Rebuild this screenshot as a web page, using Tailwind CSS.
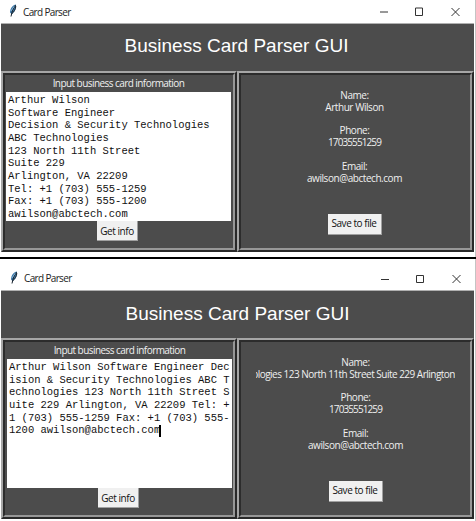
<!DOCTYPE html>
<html lang="en">
<head>
<meta charset="utf-8">
<title>Card Parser</title>
<script src="https://cdn.jsdelivr.net/npm/@tailwindcss/browser@4"></script>
</head>
<body class="w-[476px] h-[521px] overflow-hidden bg-white font-['Open_Sans','Noto_Sans',sans-serif] text-[10px] tracking-[-0.45px]">

<section class="h-[257px] pl-px pr-px border-r border-[#c4c4c4]">
  <header class="h-[23px] flex items-center pl-[8px] pr-[14px] text-[#222]">
    <svg class="w-[8px] h-[13px] mt-[-2px]" viewBox="0 0 8 13"><path d="M7 .5C4 1 1 4 1 8.5L2.5 10C6 8 7.3 4 7 .5Z" fill="#3c78a8"/><path d="M6.6 1.2C4.5 4 3 7 2 12.5M6.8 2C6.8 5 5 8.2 2.5 10" fill="none" stroke="#17232e" stroke-width="1"/><path d="M5.2 2.3 2 7" stroke="#9cc5e2" stroke-width=".8"/></svg>
    <span class="ml-[6px] leading-[14px] tracking-[-0.65px]">Card Parser</span>
    <svg class="ml-auto w-[82px] h-[12px]" viewBox="0 0 82 12" fill="none" stroke="#333" stroke-width="1"><path d="M2 6h8M37.5 2h7v7.5h-7zM73.5 2l8 8m0-8-8 8"/></svg>
  </header>
  <div class="h-[48px] bg-[#4c4c4c] border-t border-[#b0b0b0] flex items-center justify-center pb-[2px] pr-[2px] text-white font-['Liberation_Sans',sans-serif] text-[19px] tracking-[0px]">Business Card Parser GUI</div>
  <div class="flex h-[181px] bg-[#4c4c4c]">
    <div class="w-[236px] border-2 border-t-[#a6a6a6] border-l-[#a6a6a6] border-r-[#292929] border-b-[#292929]">
      <div class="h-full border-2 border-t-[#2c2c2c] border-l-[#2c2c2c] border-r-[#979797] border-b-[#979797] flex flex-col items-center">
        <div class="h-[17px] leading-[17px] text-[#f0f0f0] tracking-[-0.56px] pr-px">Input business card information</div>
        <div class="self-start ml-px w-[225px] h-[129px] bg-white pl-[2px] pt-[2px] text-[#111] font-['Liberation_Mono',monospace] text-[10.5px] leading-[12.65px] tracking-[0px] whitespace-pre">Arthur Wilson
Software Engineer
Decision &amp; Security Technologies
ABC Technologies
123 North 11th Street
Suite 229
Arlington, VA 22209
Tel: +1 (703) 555-1259
Fax: +1 (703) 555-1200
awilson@abctech.com</div>
        <button class="mr-[3px] w-[41px] h-[20px] bg-[#f0f0f0] border-r border-b border-[#a0a0a0] leading-[18px] text-[#111]">Get info</button>
      </div>
    </div>
    <div class="w-[237px] border-2 border-t-[#a6a6a6] border-l-[#a6a6a6] border-r-[#292929] border-b-[#292929]">
      <div class="h-full border-2 border-t-[#2c2c2c] border-l-[#2c2c2c] border-r-[#979797] border-b-[#979797] flex flex-col items-center pt-[15px] pr-[2px] text-[#f0f0f0] text-center leading-[11.8px] whitespace-nowrap">
        <div>Name:<br>Arthur Wilson</div>
        <div class="mt-[11.8px]">Phone:<br><span class="tracking-[-0.9px]">17035551259</span></div>
        <div class="mt-[11.8px]">Email:<br>awilson@abctech.com</div>
        <button class="mt-[30px] w-[54px] h-[21px] bg-[#f0f0f0] border-r border-b border-[#a0a0a0] text-[#111]">Save to file</button>
      </div>
    </div>
  </div>
</section>

<div class="h-[2px] bg-black"></div>

<section class="h-[262px] pl-px pr-px border-r border-[#c4c4c4]">
  <header class="h-[31px] flex items-end pl-[9px] pr-[13px] pb-[5px] text-[#222]">
    <svg class="w-[8px] h-[13px] mb-[1px]" viewBox="0 0 8 13"><path d="M7 .5C4 1 1 4 1 8.5L2.5 10C6 8 7.3 4 7 .5Z" fill="#3c78a8"/><path d="M6.6 1.2C4.5 4 3 7 2 12.5M6.8 2C6.8 5 5 8.2 2.5 10" fill="none" stroke="#17232e" stroke-width="1"/><path d="M5.2 2.3 2 7" stroke="#9cc5e2" stroke-width=".8"/></svg>
    <span class="ml-[6px] leading-[14px] tracking-[-0.65px]">Card Parser</span>
    <svg class="ml-auto w-[82px] h-[12px]" viewBox="0 0 82 12" fill="none" stroke="#333" stroke-width="1"><path d="M2 6.5h8M37.5 2.5h7v7h-7zM73.5 2l8 8m0-8-8 8"/></svg>
  </header>
  <div class="h-[48px] bg-[#4c4c4c] border-t border-[#b0b0b0] flex items-center justify-center pb-px text-white font-['Liberation_Sans',sans-serif] text-[19px] tracking-[0px]">Business Card Parser GUI</div>
  <div class="flex h-[181px] bg-[#4c4c4c]">
    <div class="w-[236px] border-2 border-t-[#a6a6a6] border-l-[#a6a6a6] border-r-[#292929] border-b-[#292929]">
      <div class="h-full border-2 border-t-[#2c2c2c] border-l-[#2c2c2c] border-r-[#979797] border-b-[#979797] flex flex-col items-center">
        <div class="h-[17px] leading-[17px] text-[#f0f0f0] tracking-[-0.56px] pl-px">Input business card information</div>
        <div class="self-start ml-[2px] w-[225px] h-[129px] bg-white pl-[2px] pt-[2px] text-[#111] font-['Liberation_Mono',monospace] text-[10.5px] leading-[12.65px] tracking-[0px] whitespace-pre">Arthur Wilson Software Engineer Dec
ision &amp; Security Technologies ABC T
echnologies 123 North 11th Street S
uite 229 Arlington, VA 22209 Tel: +
1 (703) 555-1259 Fax: +1 (703) 555-
1200 awilson@abctech.com<span class="inline-block -ml-px w-[2px] h-[12px] bg-black align-middle"></span></div>
        <button class="mr-px w-[41px] h-[20px] bg-[#f0f0f0] border-r border-b border-[#a0a0a0] leading-[18px] text-[#111]">Get info</button>
      </div>
    </div>
    <div class="w-[237px] border-2 border-t-[#a6a6a6] border-l-[#a6a6a6] border-r-[#292929] border-b-[#292929]">
      <div class="h-full border-2 border-t-[#2c2c2c] border-l-[#2c2c2c] border-r-[#979797] border-b-[#979797] flex flex-col items-center pt-[15px] text-[#f0f0f0] text-center leading-[11.8px] whitespace-nowrap">
        <div class="w-[199px] overflow-hidden">Name:<br><span class="flex justify-end tracking-[-0.51px]"><span>ologies 123 North 11th Street Suite 229 Arlington</span></span></div>
        <div class="mt-[11.8px]">Phone:<br><span class="tracking-[-0.9px]">17035551259</span></div>
        <div class="mt-[11.8px]">Email:<br>awilson@abctech.com</div>
        <button class="mt-[30px] w-[54px] h-[21px] bg-[#f0f0f0] border-r border-b border-[#a0a0a0] text-[#111]">Save to file</button>
      </div>
    </div>
  </div>
</section>
</body>
</html>
